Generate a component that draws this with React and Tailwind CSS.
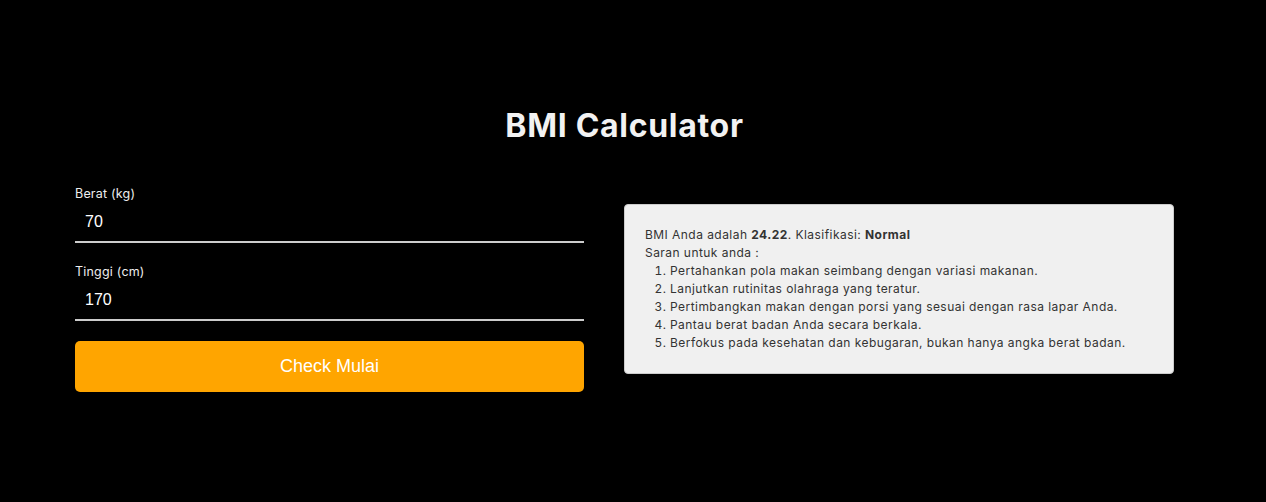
import React, { useState } from "react";

const tips = [
  "Pertahankan pola makan seimbang dengan variasi makanan.",
  "Lanjutkan rutinitas olahraga yang teratur.",
  "Pertimbangkan makan dengan porsi yang sesuai dengan rasa lapar Anda.",
  "Pantau berat badan Anda secara berkala.",
  "Berfokus pada kesehatan dan kebugaran, bukan hanya angka berat badan.",
];

export default function App() {
  const [berat, setBerat] = useState("70");
  const [tinggi, setTinggi] = useState("170");

  return (
    <div className="min-h-[502px] bg-black text-white font-['Inter',sans-serif] pt-[104px]">
      <div className="ml-[75px] w-[1099px]">
        <h1 className="text-center text-[32px] font-bold leading-[44px] text-[#f2f2f2] tracking-[0.7px]">
          BMI Calculator
        </h1>

        <div className="mt-[37px] flex items-center gap-[40px]">
          {/* form */}
          <div className="w-[509px] shrink-0">
            <label className="block text-[12.5px] leading-[18px] text-[#eee] tracking-[0.2px]">Berat (kg)</label>
            <input
              value={berat}
              onChange={(e) => setBerat(e.target.value)}
              className="block w-full bg-transparent border-0 border-b-2 border-[#ccc] px-[10px] pt-[9px] pb-[10px] text-[16px] leading-[19px] text-white font-['Liberation_Sans',sans-serif] outline-none"
            />
            <label className="block mt-[20px] text-[12.5px] leading-[18px] text-[#eee] tracking-[0.2px]">Tinggi (cm)</label>
            <input
              value={tinggi}
              onChange={(e) => setTinggi(e.target.value)}
              className="block w-full bg-transparent border-0 border-b-2 border-[#ccc] px-[10px] pt-[9px] pb-[10px] text-[16px] leading-[19px] text-white font-['Liberation_Sans',sans-serif] outline-none"
            />
            <button className="mt-[20px] w-full h-[51px] rounded-[5px] bg-[#ffa500] text-white text-[18px] font-['Liberation_Sans',sans-serif]">
              Check Mulai
            </button>
          </div>

          {/* hasil */}
          <div className="flex-1 rounded-[4px] border border-[#ccc] bg-[#f0f0f0] px-[20px] pt-[21px] pb-[21px] text-[12px] leading-[18px] text-[#333] tracking-[0.45px]">
            <p>
              BMI Anda adalah <b>24.22</b>. Klasifikasi: <b>Normal</b>
            </p>
            <p>Saran untuk anda :</p>
            <ol className="list-decimal pl-[25px]">
              {tips.map((t) => (
                <li key={t}>{t}</li>
              ))}
            </ol>
          </div>
        </div>
      </div>
    </div>
  );
}
